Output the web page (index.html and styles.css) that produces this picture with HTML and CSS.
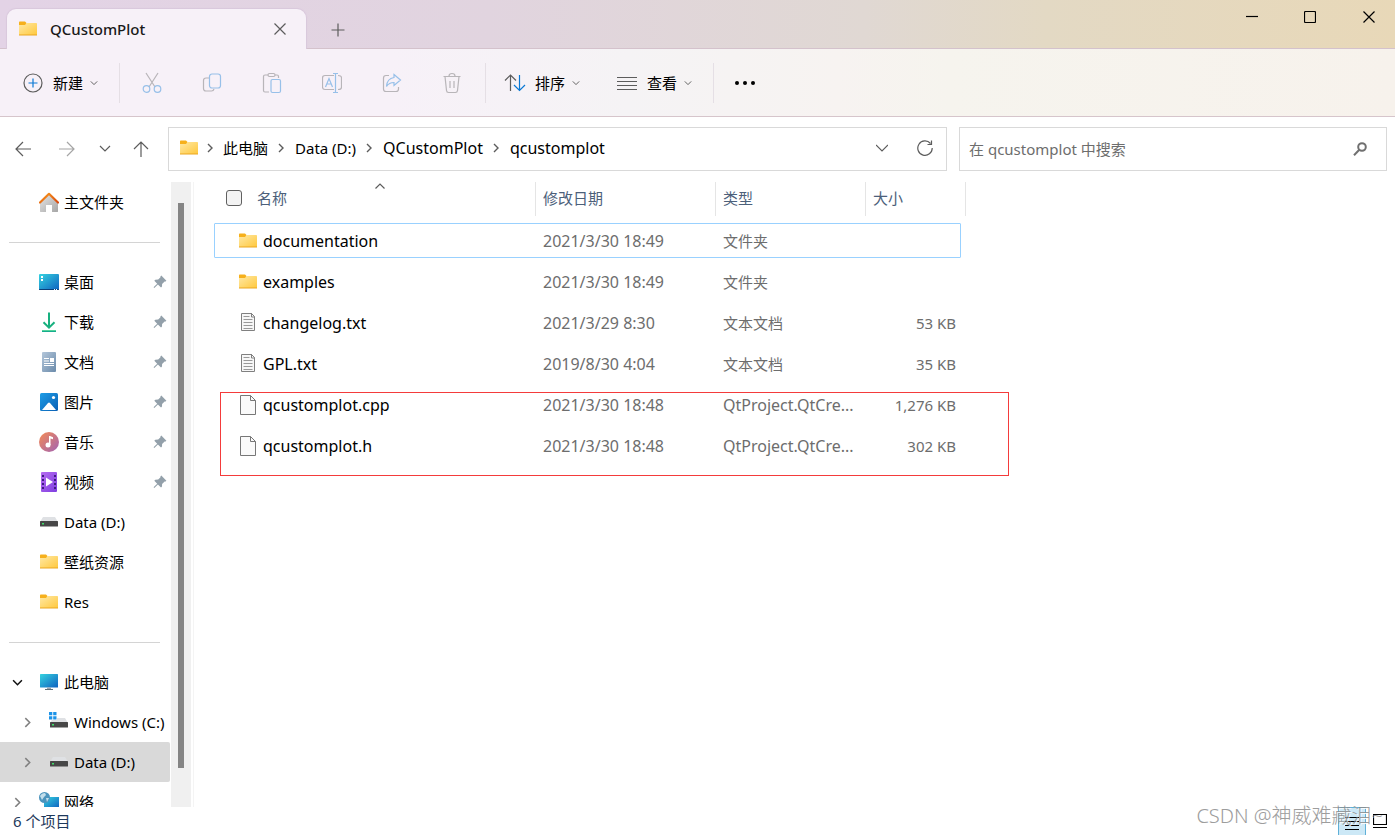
FILE: index.html
```html
<!DOCTYPE html>
<html lang="zh-CN">
<head>
<meta charset="utf-8">
<title>QCustomPlot</title>
<link rel="stylesheet" href="styles.css">
</head>
<body>
<svg class="sprite" aria-hidden="true">
  <defs>
    <linearGradient id="g-folder" x1="0" y1="0" x2="1" y2="1"><stop offset="0" stop-color="#ffe9a6"/><stop offset="1" stop-color="#ffc83d"/></linearGradient>
    <linearGradient id="g-blue" x1="0" y1="0" x2="1" y2="1"><stop offset="0" stop-color="#35d3e0"/><stop offset="1" stop-color="#0f62c0"/></linearGradient>
    <linearGradient id="g-home" x1="0" y1="0" x2="1" y2="1"><stop offset="0" stop-color="#e6e6e6"/><stop offset="1" stop-color="#a6a6a6"/></linearGradient>
    <linearGradient id="g-roof" x1="0" y1="0" x2="1" y2="1"><stop offset="0" stop-color="#fb9a1c"/><stop offset="1" stop-color="#d8480e"/></linearGradient>
    <linearGradient id="g-down" x1="0" y1="0" x2="0" y2="1"><stop offset="0" stop-color="#2fd07f"/><stop offset="1" stop-color="#0c9e94"/></linearGradient>
    <linearGradient id="g-doc" x1="0" y1="0" x2="1" y2="1"><stop offset="0" stop-color="#b3c6da"/><stop offset="1" stop-color="#6b8bab"/></linearGradient>
    <linearGradient id="g-pic" x1="0" y1="0" x2="1" y2="1"><stop offset="0" stop-color="#1e9de6"/><stop offset="1" stop-color="#0a5fb4"/></linearGradient>
    <linearGradient id="g-music" x1="0" y1="0" x2="1" y2="1"><stop offset="0" stop-color="#f58b54"/><stop offset="1" stop-color="#a163b4"/></linearGradient>
    <linearGradient id="g-video" x1="0" y1="0" x2="1" y2="1"><stop offset="0" stop-color="#b56bf0"/><stop offset="1" stop-color="#7f3fe0"/></linearGradient>
  </defs>
  <symbol id="i-folder" viewBox="0 0 20 20"><path d="M1 3.500c0-.6.3-1 1-1h5l1.500 1.500V8H1z" fill="#f6b01c"/><path d="M1 6h6l1.500-2H18c.6 0 1 .4 1 1v11H1z" fill="url(#g-folder)"/><path d="M1 15.500h18v1H1z" fill="#eaa620"/></symbol>
  <symbol id="i-home" viewBox="0 0 20 20"><path d="M1 11l9-9 9 9v8.500c0 .3-.2.500-.5.500H13v-7H7v7H1.500c-.3 0-.5-.2-.5-.500z" fill="url(#g-home)"/><path d="M1 10.500L10 1.800l9 8.700" fill="none" stroke="url(#g-roof)" stroke-width="2.200" stroke-linecap="round" stroke-linejoin="round"/></symbol>
  <symbol id="i-desktop" viewBox="0 0 20 20"><rect y="2" width="20" height="16" rx="1" fill="url(#g-blue)"/><path d="M0 17h20c0 .6-.4 1-1 1H1c-.6 0-1-.4-1-1z" fill="#0b3f78"/><path d="M2 4h2v2H2zM2 7h2v2H2zM15 17h1v1h-1zM17 17h1v1h-1z" fill="#fff"/></symbol>
  <symbol id="i-download" viewBox="0 0 20 20"><path d="M10 .500v15M4.500 10.200l5.500 5.500 5.500-5.500" fill="none" stroke="#17b07f" stroke-width="2"/><path d="M3 18.200h14v1.800H3z" fill="url(#g-down)"/></symbol>
  <symbol id="i-doc" viewBox="0 0 20 20"><rect x="3" width="14" height="20" rx="1" fill="url(#g-doc)"/><path d="M5 6.500h5M5 9h5M5 11.500h10" stroke="#fff" stroke-width="1.200"/><path d="M11 6h4v4h-4zM5 13h10v1H5z" fill="#fff"/></symbol>
  <symbol id="i-pic" viewBox="0 0 20 20"><rect x="1" y="1" width="18" height="18" rx="1.500" fill="url(#g-pic)"/><path d="M3 18l6-7q1-1.200 2 0l6 7z" fill="#fff"/><circle cx="14.500" cy="5.500" r="1.600" fill="#fff"/></symbol>
  <symbol id="i-music" viewBox="0 0 20 20"><circle cx="10" cy="10" r="10" fill="url(#g-music)"/><circle cx="9" cy="13" r="2.500" fill="#fff"/><path d="M10 4h1l3 1.300v2l-2.500-.8V13H10z" fill="#fff"/></symbol>
  <symbol id="i-video" viewBox="0 0 20 20"><rect x="2" width="16" height="20" rx="1" fill="url(#g-video)"/><path d="M7 5.500l7 4.500-7 4.500z" fill="#fff"/><path d="M4 3v15M16 3v15" stroke="#3f1c80" stroke-width="2" stroke-dasharray="2 2"/></symbol>
  <symbol id="i-drive" viewBox="0 0 20 20"><path d="M4 5h12l3 5H1z" fill="#dfe1e4"/><rect x="1" y="9" width="18" height="5.500" rx=".5" fill="#474747"/><path d="M3 11h2v1.500H3z" fill="#3fe06a"/></symbol>
  <symbol id="i-windrive" viewBox="0 0 20 20"><path d="M4 6h12l3 5H1z" fill="#dfe1e4"/><rect x="1" y="10" width="18" height="5.500" rx=".5" fill="#474747"/><path d="M3 12h2v1.500H3z" fill="#3fe06a"/><path d="M-1-1h9v9h-9z" fill="#fff"/><path d="M0 0h3.300v3.300H0zM4.200 0h3.300v3.300H4.200zM0 4.200h3.300v3.300H0zM4.200 4.200h3.300v3.300H4.200z" fill="#1c93e8"/></symbol>
  <symbol id="i-pc" viewBox="0 0 20 20"><rect x="1" y="2" width="18" height="13.500" rx=".5" fill="url(#g-blue)"/><path d="M8 15.500h4v2H8z" fill="#9aa5ad"/><path d="M6 17h8v1H6z" fill="#60707a"/></symbol>
  <symbol id="i-net" viewBox="0 0 20 20"><rect x="5" y="5" width="15" height="11" fill="url(#g-blue)"/><path d="M11 16h4v2h-4z" fill="#7b8a94"/><circle cx="5.500" cy="5.500" r="5.500" fill="#4c94bd"/><path d="M1 4c1-2 3-3 5-3l1 2-2 2-2 3zM7 6l3 0-2 4z" fill="#c3deeb"/></symbol>
  <symbol id="i-pin" viewBox="0 0 14 14"><path d="M8.300.600l5.100 5.100-.8.800-1-.1-2.500 2.500-.1 2.600-1 1L4.900 9.400 1.300 13l-.6-.500.1-.400L4.200 8.700 1.300 5.800l1-1 2.900-.2 2.300-2.300-.1-.8z" fill="#93a0aa"/></symbol>
  <symbol id="i-text" viewBox="0 0 20 20"><path d="M3.500.500h10l3 3v14h-13z" fill="#f7f7f7" stroke="#808080"/><path d="M13.500 0v4H17" fill="none" stroke="#808080"/><path d="M5.500 3.500h6M5.500 6.500h9M5.500 9.500h9M5.500 12.500h9M5.500 15.500h9" stroke="#999"/></symbol>
  <symbol id="i-file" viewBox="0 0 20 20"><path d="M2.500.500h10l5 5v14h-15z" fill="#fafafa" stroke="#777"/><path d="M12.500.500v5h5" fill="none" stroke="#777"/></symbol>
  <symbol id="i-chev" viewBox="0 0 10 10"><path d="M1 3l4 4 4-4"/></symbol>
  <symbol id="i-right" viewBox="0 0 10 10"><path d="M3 1l4 4-4 4"/></symbol>
</svg>

<header class="titlebar">
  <div class="tab">
    <svg class="icon"><use href="#i-folder"/></svg>
    <span class="tab-title">QCustomPlot</span>
    <button class="plain" aria-label="关闭标签页"><svg class="line" width="12" height="12"><path d="M.5.500l11 11M11.500.500l-11 11"/></svg></button>
  </div>
  <button class="plain add" aria-label="新标签页"><svg class="line" width="14" height="14"><path d="M7 .500v13M.5 7h13"/></svg></button>
  <div class="window-buttons">
    <button class="plain" aria-label="最小化"><svg class="line dark" width="12" height="12"><path d="M0 5.500h12"/></svg></button>
    <button class="plain" aria-label="最大化"><svg class="line dark" width="12" height="12"><rect x=".5" y=".5" width="11" height="11" rx="1"/></svg></button>
    <button class="plain" aria-label="关闭"><svg class="line dark" width="12" height="12"><path d="M.5.500l11 11M11.500.500l-11 11"/></svg></button>
  </div>
</header>

<div class="toolbar">
  <button class="command new"><svg class="line" width="20" height="20"><circle cx="10" cy="10" r="9"/><path class="accent" d="M10 5.500v9M5.500 10h9"/></svg>新建<svg class="line caret"><use href="#i-chev"/></svg></button>
  <i class="divider"></i>
  <div class="tools">
    <button class="plain" aria-label="剪切"><svg class="line" width="20" height="22"><path d="M4 1l9 14M16 1L7 15"/><g class="accent"><circle cx="4.500" cy="17" r="3.300"/><circle cx="15.500" cy="17" r="3.300"/></g></svg></button>
    <button class="plain" aria-label="复制"><svg class="line" width="20" height="22"><path d="M7 6H4Q1.500 6 1.500 8.500v8Q1.500 19 4 19h5.500q2 0 2.500-2"/><rect class="accent" x="7.500" y="2" width="11" height="14" rx="2.500"/></svg></button>
    <button class="plain" aria-label="粘贴"><svg class="line" width="20" height="22"><path d="M6 3H3Q1.500 3 1.500 4.500v14Q1.500 20 3 20h4M13 3h2q1.500 0 1.500 1.500V6"/><rect x="6" y="1.500" width="7" height="3" rx="1.500"/><rect class="accent" x="9" y="7.500" width="9.500" height="13" rx="1.500"/></svg></button>
    <button class="plain" aria-label="重命名"><svg class="line" width="20" height="22"><path d="M12 3.500H3Q.5 3.500.5 6v9q0 2.500 2.500 2.500h9M16 3.500q3.500 0 3.500 2.500v9q0 2.500-3.500 2.500"/><path class="accent" d="M3.500 15L7 6.500l3.500 8.500M4.700 12h4.600M11 1.500h5M11 20.500h5M13.500 1.500v19"/></svg></button>
    <button class="plain" aria-label="共享"><svg class="line" width="20" height="22"><path d="M7 3.500H4Q1.500 3.500 1.500 6v11q0 2.500 2.500 2.500h10q2.500 0 2.500-2.500v-2"/><path class="accent" d="M12 2.500l6.500 5.500-6.500 5.500v-3q-5 0-7.500 4 .5-8 7.500-9z"/></svg></button>
    <button class="plain" aria-label="删除"><svg class="line" width="20" height="22"><path d="M1.500 4.500h17M7 4q0-2.500 3-2.500T13 4M3 4.500l1.500 14q.2 2 2 2h7q1.800 0 2-2L17 4.500M8 9v7M12 9v7"/></svg></button>
  </div>
  <i class="divider"></i>
  <button class="command sort"><svg class="line" width="22" height="20"><path d="M6.500 18V2M1 7.500L6.500 2 12 7.500"/><path class="accent" d="M15.500 2v15M10 12l5.500 5.500 5.500-5.500"/></svg>排序<svg class="line caret"><use href="#i-chev"/></svg></button>
  <button class="command view"><svg class="line" width="20" height="16"><path d="M0 2.500h20M0 6.500h20M0 10.500h20M0 14.500h20"/></svg>查看<svg class="line caret"><use href="#i-chev"/></svg></button>
  <i class="divider"></i>
  <button class="plain more" aria-label="更多"><svg width="22" height="6"><circle cx="3" cy="3" r="2"/><circle cx="11" cy="3" r="2"/><circle cx="19" cy="3" r="2"/></svg></button>
</div>

<div class="navbar">
  <nav class="history">
    <button class="plain" aria-label="后退"><svg class="line" width="16" height="16"><path d="M16 8H1M8 1L1 8l7 7"/></svg></button>
    <button class="plain faded" aria-label="前进"><svg class="line" width="16" height="16"><path d="M0 8h15M8 1l7 7-7 7"/></svg></button>
    <button class="plain" aria-label="最近"><svg class="line" width="12" height="12"><path d="M1 3l5 5 5-5"/></svg></button>
    <button class="plain" aria-label="向上"><svg class="line" width="16" height="16"><path d="M8 16V1M1 8l7-7 7 7"/></svg></button>
  </nav>
  <div class="address">
    <svg class="icon"><use href="#i-folder"/></svg>
    <svg class="line crumb"><use href="#i-right"/></svg><a href="#">此电脑</a>
    <svg class="line crumb"><use href="#i-right"/></svg><a href="#">Data (D:)</a>
    <svg class="line crumb"><use href="#i-right"/></svg><a class="wide" href="#">QCustomPlot</a>
    <svg class="line crumb"><use href="#i-right"/></svg><a class="wide" href="#">qcustomplot</a>
    <div class="address-tools">
      <button class="plain" aria-label="历史位置"><svg class="line" width="12" height="12"><path d="M0 3l6 6 6-6"/></svg></button>
      <button class="plain" aria-label="刷新"><svg class="line" width="16" height="16"><path d="M13.500 3.500A7.200 7.200 0 1 0 15.200 8M10.500 4.500h4V.5"/></svg></button>
    </div>
  </div>
  <div class="search">
    <input type="search" aria-label="搜索" placeholder="在 qcustomplot 中搜索">
    <button class="plain" aria-label="开始搜索"><svg class="line bold" width="14" height="14"><circle cx="9" cy="5" r="3.800"/><path d="M6.300 7.800L1 13.200"/></svg></button>
  </div>
</div>

<main class="main">
  <aside class="side">
    <a class="place" href="#"><svg class="icon"><use href="#i-home"/></svg>主文件夹</a>
    <hr>
    <a class="place" href="#"><svg class="icon"><use href="#i-desktop"/></svg>桌面<svg class="pin"><use href="#i-pin"/></svg></a>
    <a class="place" href="#"><svg class="icon"><use href="#i-download"/></svg>下载<svg class="pin"><use href="#i-pin"/></svg></a>
    <a class="place" href="#"><svg class="icon"><use href="#i-doc"/></svg>文档<svg class="pin"><use href="#i-pin"/></svg></a>
    <a class="place" href="#"><svg class="icon"><use href="#i-pic"/></svg>图片<svg class="pin"><use href="#i-pin"/></svg></a>
    <a class="place" href="#"><svg class="icon"><use href="#i-music"/></svg>音乐<svg class="pin"><use href="#i-pin"/></svg></a>
    <a class="place" href="#"><svg class="icon"><use href="#i-video"/></svg>视频<svg class="pin"><use href="#i-pin"/></svg></a>
    <a class="place" href="#"><svg class="icon"><use href="#i-drive"/></svg>Data (D:)</a>
    <a class="place" href="#"><svg class="icon"><use href="#i-folder"/></svg>壁纸资源</a>
    <a class="place" href="#"><svg class="icon"><use href="#i-folder"/></svg>Res</a>
    <hr>
    <a class="place tree open" href="#"><svg class="line twist"><use href="#i-chev"/></svg><svg class="icon"><use href="#i-pc"/></svg>此电脑</a>
    <a class="place tree child" href="#"><svg class="line twist"><use href="#i-right"/></svg><svg class="icon"><use href="#i-windrive"/></svg>Windows (C:)</a>
    <a class="place tree child current" href="#"><svg class="line twist"><use href="#i-right"/></svg><svg class="icon"><use href="#i-drive"/></svg>Data (D:)</a>
    <a class="place tree" href="#"><svg class="line twist"><use href="#i-right"/></svg><svg class="icon"><use href="#i-net"/></svg>网络</a>
  </aside>
  <div class="scroll"><div class="thumb"></div></div>
  <section class="files">
    <table>
      <colgroup><col class="c-name"><col class="c-date"><col class="c-type"><col class="c-size"></colgroup>
      <thead>
        <tr>
          <th><div class="head first"><input type="checkbox" id="all"><label for="all">名称</label><svg class="line sorted" width="10" height="6"><path d="M.5 5.500L5 1l4.500 4.500"/></svg></div></th>
          <th><div class="head">修改日期</div></th>
          <th><div class="head">类型</div></th>
          <th><div class="head">大小</div></th>
        </tr>
      </thead>
      <tbody>
        <tr class="focused"><td><div class="name"><svg class="icon"><use href="#i-folder"/></svg>documentation</div></td><td class="wide">2021/3/30 18:49</td><td>文件夹</td><td></td></tr>
        <tr><td><div class="name"><svg class="icon"><use href="#i-folder"/></svg>examples</div></td><td class="wide">2021/3/30 18:49</td><td>文件夹</td><td></td></tr>
        <tr><td><div class="name"><svg class="icon"><use href="#i-text"/></svg>changelog.txt</div></td><td class="wide">2021/3/29 8:30</td><td>文本文档</td><td>53 KB</td></tr>
        <tr><td><div class="name"><svg class="icon"><use href="#i-text"/></svg>GPL.txt</div></td><td class="wide">2019/8/30 4:04</td><td>文本文档</td><td>35 KB</td></tr>
        <tr><td><div class="name"><svg class="icon"><use href="#i-file"/></svg>qcustomplot.cpp</div></td><td class="wide">2021/3/30 18:48</td><td class="wide">QtProject.QtCre...</td><td>1,276 KB</td></tr>
        <tr><td><div class="name"><svg class="icon"><use href="#i-file"/></svg>qcustomplot.h</div></td><td class="wide">2021/3/30 18:48</td><td class="wide">QtProject.QtCre...</td><td>302 KB</td></tr>
      </tbody>
    </table>
    <div class="callout"></div>
  </section>
</main>

<footer class="status">
  <span>6 个项目</span>
  <div class="modes">
    <button class="plain on" aria-label="详细信息"><svg class="line dark" width="14" height="18"><path d="M0 4.500h14M0 8.500h14M0 12.500h14M0 16.500h14"/></svg></button>
    <button class="plain" aria-label="大图标"><svg class="line dark" width="14" height="14"><path d="M.5.500h13v10H.5zM0 13.500h14"/></svg></button>
  </div>
  <div class="watermark">CSDN @神威难藏泪~</div>
</footer>
</body>
</html>
```
FILE: styles.css
```css
* { box-sizing: border-box; }

body {
  margin: 0;
  height: 100vh;
  display: flex;
  flex-direction: column;
  overflow: hidden;
  background: #fff;
  color: #000;
  font: 15px/20px "Noto Sans", "Noto Sans CJK SC", sans-serif;
}

a { color: inherit; text-decoration: none; }
svg { flex: none; }
.sprite { position: absolute; width: 0; height: 0; }
.icon { width: 20px; height: 20px; overflow: visible; }
.line { fill: none; stroke: #5c5c5c; stroke-width: 1.2; }
.line.dark { stroke: #000; }
.line.bold { stroke-width: 2; stroke: #707070; }
.accent { stroke: #0a78d4; }
.wide { font-size: 16px; }

button { font: inherit; color: inherit; border: 0; background: none; padding: 0; }
.plain { display: flex; align-items: center; justify-content: center; }

.titlebar {
  flex: none;
  height: 49px;
  display: flex;
  padding-left: 7px;
  background: linear-gradient(90deg, #e3d3e6, #e1d4df 35%, #e0d8d3 62%, #e3d9c4 75%, #e8d8b8);
  box-shadow: inset 0 -1px #d4c2cc;
}
.tab {
  width: 299px;
  height: 40px;
  margin-top: 9px;
  padding: 0 20px 0 11px;
  display: flex;
  align-items: center;
  border-radius: 9px 9px 0 0;
  background: #f7f1f8;
  box-shadow: 0 0 1px 1px #d9c8dc;
  clip-path: inset(-3px -3px 0 -3px);
}
.tab-title { flex: 1; margin-left: 12px; color: #1a1a1a; font-weight: 500; }
.add { width: 64px; height: 40px; margin-top: 10px; }
.window-buttons { margin-left: auto; display: flex; height: 33px; }
.window-buttons .plain { width: 58px; }
.window-buttons .plain:last-child { width: 52px; margin-left: 4px; }

.toolbar {
  flex: none;
  height: 68px;
  display: flex;
  align-items: center;
  padding-left: 1px;
  background: linear-gradient(90deg, #f7f1f8 0, #f7f1f8 28%, #f5f3f5 45%, #f7f3f1 60%, #f6f4ee 68%, #f7f2ec);
  border-bottom: 1px solid #d6c5cb;
}
.command { display: flex; align-items: center; white-space: nowrap; }
.command .caret { width: 8px; height: 8px; margin-left: 7px; }
.new { padding-left: 22px; margin-right: 21px; gap: 10px; }
.new .caret { margin-left: -3px; }
.sort { padding-left: 18px; gap: 9px; }
.view { padding-left: 37px; margin-right: 21px; gap: 10px; }
.sort .caret { margin-left: -2px; }
.view .caret { margin-left: -3px; }
.divider { width: 1px; height: 40px; background: #e5dfe5; }
.tools { display: flex; margin: 0 3px 0 2px; opacity: .4; }
.tools .plain { width: 60px; height: 40px; }
.more { margin-left: 20px; }

.navbar {
  flex: none;
  display: grid;
  grid-template-columns: 168px 779fr 440fr;
  padding: 10px 8px 11px 0;
}
.history { display: flex; align-items: center; padding-left: 3px; }
.history .plain { width: 40px; height: 40px; }
.history .plain:nth-child(1) { margin-right: 4px; }
.history .plain:nth-child(n+3) { width: 36px; }
.faded { opacity: .55; }
.address {
  min-width: 0;
  height: 44px;
  display: flex;
  align-items: center;
  padding: 0 0 2px 10px;
  border: 1px solid #d9d9d9;
  white-space: nowrap;
}
.crumb { width: 10px; height: 10px; margin: 0 9px 0 8px; stroke-width: 1.4; }
.icon + .crumb { margin: 0 8px 0 6px; }
.address-tools { margin-left: auto; display: flex; }
.address-tools .plain { width: 43px; height: 40px; }
.search {
  min-width: 0;
  margin-left: 12px;
  height: 44px;
  display: flex;
  border: 1px solid #d9d9d9;
}
.search input {
  flex: 1;
  min-width: 0;
  border: 0;
  outline: 0;
  padding: 0 0 0 9px;
  background: none;
  font: inherit;
}
.search input::placeholder { color: #6d6d6d; }
.search .plain { width: 53px; }

.main { flex: 1; min-height: 0; display: flex; }
.side { width: 171px; flex: none; overflow: hidden; padding-right: 1px; }
.place { height: 40px; display: flex; align-items: center; gap: 5px; padding: 0 3px 0 39px; white-space: nowrap; }
.pin { width: 14px; height: 14px; margin-left: auto; }
.side hr { height: 1px; margin: 20px 10px 19px 9px; border: 0; background: #d4d4d4; }
.tree { padding: 0 0 0 12px; }
.tree .twist { width: 11px; height: 11px; margin-right: 11px; stroke-width: 1.4; stroke: #808080; }
.tree.open .twist { stroke: #111; }
.child { padding-left: 22px; }
.current { background: #d9d9d9; border-radius: 0 2px 2px 0; }

.scroll { flex: none; width: 23px; padding: 21px 10px 39px 7px; background: linear-gradient(90deg, #f0f0f0 20px, #fff 20px, #fff 22px, #f4f4f4 22px); }
.thumb { width: 6px; height: 100%; background: #858585; }

.files { flex: 1; min-width: 0; position: relative; padding-left: 20px; }
table { width: 752px; table-layout: fixed; border-collapse: collapse; }
.c-name { width: 322px; }
.c-date { width: 180px; }
.c-type { width: 150px; }
.c-size { width: 100px; }
th { padding: 0 0 4px; font-weight: 400; text-align: left; color: #4c607a; }
.head { height: 34px; padding: 0 0 2px 7px; display: flex; align-items: center; border-right: 1px solid #e5e5e5; }
.first { position: relative; padding-left: 12px; gap: 15px; }
.first input { appearance: none; width: 16px; height: 16px; margin: 0; border: 1px solid #606060; border-radius: 3px; background: #f3f3f3; }
.sorted { position: absolute; top: 1px; left: 50%; }
td { height: 41px; padding: 0 0 0 7px; color: #6d6d6d; white-space: nowrap; }
td:first-child { padding: 0 0 0 24px; color: #000; font-size: 16px; }
td:last-child { padding-right: 10px; text-align: right; }
.name { display: flex; align-items: center; gap: 5px; }
tr.focused { position: relative; }
tr.focused td:first-child::before {
  content: "";
  position: absolute;
  inset: 3px 5px 3px 0;
  border: 1px solid #99d1ff;
  border-radius: 1px;
}
.callout { position: absolute; left: 26px; top: 210px; width: 789px; height: 84px; border: 1px solid #f43b3b; }

.status { flex: none; position: relative; height: 28px; display: flex; align-items: center; padding: 0 1px 0 13px; color: #1e395b; }
.modes { margin-left: auto; display: flex; height: 28px; }
.modes .plain { width: 28px; }
.modes .on { background: #cce8f6; border: 1px solid #5fb0d8; border-bottom: 0; }
.watermark {
  position: absolute;
  right: 12px;
  bottom: 6px;
  color: #8c8c8c;
  opacity: .85;
  font-size: 20px;
  font-weight: 300;
  line-height: 26px;
  white-space: nowrap;
  text-shadow: 1px 1px #fff;
}
```
